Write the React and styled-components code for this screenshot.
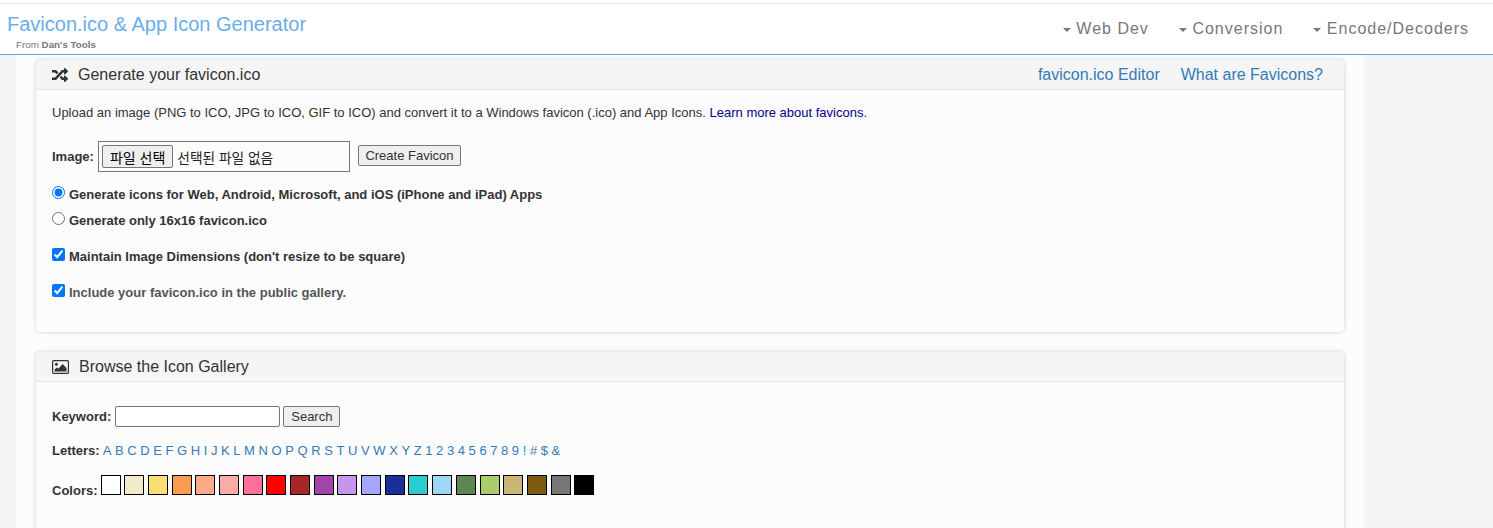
import React from "react";
import styled, { createGlobalStyle } from "styled-components";
import { FaRandom } from "react-icons/fa";

const GlobalStyle = createGlobalStyle`
  html, body {
    margin: 0;
    padding: 0;
    height: 528px;
    overflow: hidden;
    background: #f4f4f4;
    color: #333;
    font-family: "Liberation Sans", Arial, "Noto Sans CJK KR", sans-serif;
    font-size: 13px;
  }
  * { box-sizing: border-box; }
`;

const TopStrip = styled.div`
  height: 3px;
  background: #fff;
`;

const Navbar = styled.header`
  height: 52px;
  background: #fff;
  border-top: 1px solid #e7e7e7;
  border-bottom: 1px solid #4fafe8;
  display: flex;
  justify-content: space-between;
`;

const Brand = styled.div`
  padding: 8px 0 0 7px;
`;

const BrandTitle = styled.div`
  font-size: 20px;
  line-height: 24px;
  color: #6aaee8;
`;

const BrandSub = styled.div`
  margin: 3px 0 0 9px;
  font-size: 9.8px;
  line-height: 11px;
  color: #777;

  b {
    font-weight: bold;
    color: #777;
  }
`;

const Menu = styled.nav`
  display: flex;
  align-items: center;
  gap: 30px;
  padding: 0 24px 0 0;
  height: 50px;
`;

const MenuItem = styled.a`
  display: flex;
  align-items: center;
  gap: 5.5px;
  font-size: 16px;
  letter-spacing: 1px;
  color: #777;
`;

const Caret = styled.span`
  width: 0;
  height: 0;
  margin-top: 2px;
  border-top: 4px solid #777;
  border-left: 4px solid transparent;
  border-right: 4px solid transparent;
`;

const Content = styled.main`
  margin: 0 129px 0 16px;
  height: 473px;
  padding: 5px 20px 0;
  background: #fcfcfc;
  overflow: hidden;
`;

const Panel = styled.section`
  background: #fcfcfc;
  border-radius: 4px;
  box-shadow: 0 0 4px rgba(0, 0, 0, 0.18);
  margin-bottom: 20px;
  min-height: ${(p) => p.$minHeight || "auto"};
`;

const PanelHead = styled.div`
  height: 30px;
  padding: 0 21px 0 16px;
  display: flex;
  align-items: center;
  background: #f5f5f5;
  border-bottom: 1px solid #e6e6e6;
  border-radius: 4px 4px 0 0;
  font-size: 16px;
  color: #333;
`;

const HeadTitle = styled.span`
  margin-left: 10px;
  flex: 1;
`;

const HeadLink = styled.a`
  margin-left: 21px;
  color: #337ab7;
`;

const PanelBody = styled.div`
  padding: ${(p) => p.$padding || "15px 16px"};
`;

const Intro = styled.p`
  margin: 0 0 20px;
  line-height: 16px;
`;

const NavyLink = styled.a`
  color: #00008b;
`;

const UploadRow = styled.div`
  display: flex;
  align-items: center;
  height: 31px;
  margin-bottom: 14px;
`;

const Label = styled.b`
  margin-right: ${(p) => p.$gap || "4px"};
`;

const FileBox = styled.div`
  width: 252px;
  height: 31px;
  padding: 3px;
  border: 1px solid #767676;
  display: flex;
  align-items: center;
  font-size: 13.7px;
  color: #222;
`;

const NativeButton = styled.button`
  height: ${(p) => p.$height || "21px"};
  padding: 0 ${(p) => p.$pad || "7px"};
  margin: ${(p) => p.$margin || "0"};
  border: 1px solid #767676;
  border-radius: 2px;
  background: #efefef;
  color: ${(p) => p.$color || "#333"};
  font-family: "Liberation Sans", "Noto Sans CJK KR", sans-serif;
  font-size: ${(p) => p.$size || "13px"};
`;

const Option = styled.label`
  display: flex;
  align-items: center;
  height: 16px;
  margin-bottom: ${(p) => p.$after || "10px"};
  font-weight: bold;
  color: ${(p) => p.$color || "#333"};
`;

const Check = styled.input`
  width: 13px;
  height: 13px;
  margin: 0 4px 0 0;
  position: relative;
  top: -2px;
`;

const GalleryRow = styled.div`
  display: flex;
  align-items: ${(p) => p.$align || "center"};
  margin-bottom: ${(p) => p.$after || "0"};
`;

const KeywordInput = styled.input`
  width: 165px;
  height: 21px;
  margin-right: 3px;
  border: 1px solid #767676;
  border-radius: 2px;
  background: #fff;
`;

const LetterLink = styled.a`
  color: #337ab7;
  margin-right: 3.6px;
`;

const ColorLabel = styled.span`
  margin-right: 3px;
  font-weight: bold;
  padding-top: 8px;
`;

const Swatch = styled.a`
  width: 20px;
  height: 20px;
  margin-right: 3.7px;
  border: 1px solid #000;
  background: ${(p) => p.$color};
`;

const LETTERS = "ABCDEFGHIJKLMNOPQRSTUVWXYZ123456789!#$&".split("");
const COLORS = [
  "#ffffff", "#f3eac8", "#f9e076", "#fd9c4f", "#fbaa85", "#fcaaa8", "#fe6f9b",
  "#ff0000", "#a92626", "#a444ab", "#c795f0", "#a4a6fe", "#1b2f9b", "#2bcbce",
  "#9dd7f6", "#5f8550", "#a9cd6b", "#c8b775", "#7d5a10", "#767676", "#000000",
];

// framed picture glyph, the package one comes out too flat
function PictureIcon() {
  return (
    <svg width="17" height="14" viewBox="0 0 17 14" fill="#333">
      <rect x="0.6" y="0.6" width="15.8" height="12.8" rx="1" fill="none" stroke="#333" strokeWidth="1.2" />
      <circle cx="4.4" cy="4.2" r="1.5" />
      <path d="M2.5 11.5V9.6L5 7.4l1.4 1.3L10.6 4l3.9 4v3.5z" />
    </svg>
  );
}

export default function App() {
  return (
    <>
      <GlobalStyle />
      <TopStrip />
      <Navbar>
        <Brand>
          <BrandTitle>Favicon.ico &amp; App Icon Generator</BrandTitle>
          <BrandSub>From <b>Dan's Tools</b></BrandSub>
        </Brand>
        <Menu>
          {["Web Dev", "Conversion", "Encode/Decoders"].map((item) => (
            <MenuItem key={item}>
              <Caret />
              {item}
            </MenuItem>
          ))}
        </Menu>
      </Navbar>
      <Content>
        <Panel $minHeight="272px">
          <PanelHead>
            <FaRandom size={16} />
            <HeadTitle>Generate your favicon.ico</HeadTitle>
            <HeadLink>favicon.ico Editor</HeadLink>
            <HeadLink>What are Favicons?</HeadLink>
          </PanelHead>
          <PanelBody>
            <Intro>
              Upload an image (PNG to ICO, JPG to ICO, GIF to ICO) and convert it to a Windows favicon (.ico) and App Icons.{" "}
              <NavyLink>Learn more about favicons</NavyLink>.
            </Intro>
            <UploadRow>
              <Label>Image:</Label>
              <FileBox>
                <NativeButton $height="23px" $size="14px" $color="#000" $margin="0 4px 0 0">파일 선택</NativeButton>
                선택된 파일 없음
              </FileBox>
              <NativeButton $pad="6.5px" $margin="-2px 0 0 8px">Create Favicon</NativeButton>
            </UploadRow>
            <Option>
              <Check type="radio" name="kind" defaultChecked />
              Generate icons for Web, Android, Microsoft, and iOS (iPhone and iPad) Apps
            </Option>
            <Option $after="20px">
              <Check type="radio" name="kind" />
              Generate only 16x16 favicon.ico
            </Option>
            <Option $after="20px">
              <Check type="checkbox" defaultChecked />
              Maintain Image Dimensions (don't resize to be square)
            </Option>
            <Option $color="#555">
              <Check type="checkbox" defaultChecked />
              Include your favicon.ico in the public gallery.
            </Option>
          </PanelBody>
        </Panel>
        <Panel $minHeight="400px">
          <PanelHead>
            <PictureIcon />
            <HeadTitle>Browse the Icon Gallery</HeadTitle>
          </PanelHead>
          <PanelBody $padding="24px 16px 0">
            <GalleryRow $after="16px">
              <Label>Keyword:</Label>
              <KeywordInput />
              <NativeButton>Search</NativeButton>
            </GalleryRow>
            <GalleryRow $after="17px">
              <Label $gap="3px">Letters:</Label>
              {LETTERS.map((l) => (
                <LetterLink key={l}>{l}</LetterLink>
              ))}
            </GalleryRow>
            <GalleryRow $align="flex-start">
              <ColorLabel>Colors:</ColorLabel>
              {COLORS.map((c) => (
                <Swatch key={c} $color={c} />
              ))}
            </GalleryRow>
          </PanelBody>
        </Panel>
      </Content>
    </>
  );
}
